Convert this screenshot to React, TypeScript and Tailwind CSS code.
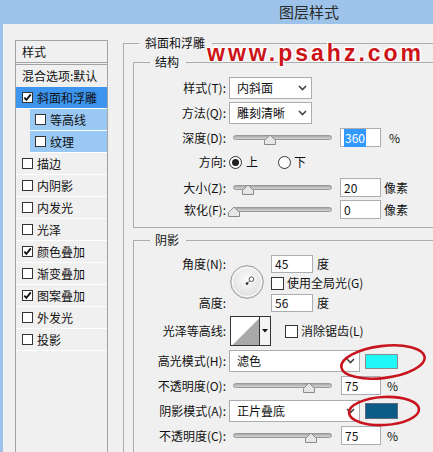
import React from "react";

type Item = { label: string; checked?: boolean; sub?: boolean; active?: boolean };

const items: Item[] = [
  { label: "斜面和浮雕", checked: true, active: true },
  { label: "等高线", sub: true },
  { label: "纹理", sub: true },
  { label: "描边" },
  { label: "内阴影" },
  { label: "内发光" },
  { label: "光泽" },
  { label: "颜色叠加", checked: true },
  { label: "渐变叠加" },
  { label: "图案叠加", checked: true },
  { label: "外发光" },
  { label: "投影" },
];

const Check = ({ checked = false, size = "h-[11px] w-[11px]" }: { checked?: boolean; size?: string }) => (
  <span className={`flex ${size} shrink-0 items-center justify-center border border-[#333] bg-white`}>
    {checked && (
      <svg width="9" height="9" viewBox="0 0 9 9">
        <path d="M1.3 4.6 L3.4 6.9 L7.8 1.4" fill="none" stroke="#111" strokeWidth="1.8" />
      </svg>
    )}
  </span>
);

const ListRow = ({ label, checked, sub, active }: Item) =>
  sub ? (
    <div className="h-[22px] pl-[14px]">
      <div className="flex h-full items-center border-b border-white bg-[#99c8f4] pl-[5px]">
        <Check checked={checked} />
        <span className="ml-[4px]">{label}</span>
      </div>
    </div>
  ) : (
    <div className={`flex h-[22px] items-center border-b border-white pl-[6px] ${active ? "bg-[#3d95ee]" : ""}`}>
      <Check checked={checked} />
      <span className="ml-[4px]">{label}</span>
    </div>
  );

const Label = ({ children }: { children: React.ReactNode }) => (
  <span className="w-[92px] shrink-0 text-right">{children}</span>
);

const Chevron = () => (
  <svg width="9" height="6" viewBox="0 0 9 6">
    <path d="M1 1 L4.5 4.5 L8 1" fill="none" stroke="#444" strokeWidth="1.6" />
  </svg>
);

const Select = ({ text, w }: { text: string; w: string }) => (
  <div className={`ml-[3px] flex ${w} h-[22px] items-center justify-between border border-[#acacac] bg-white pl-[7px] pr-[4px]`}>
    <span>{text}</span>
    <Chevron />
  </div>
);

const Num = ({ v, sel = false, w = "w-[41px]", h = "h-[19px]", ml = "ml-[8px]" }: { v: string; sel?: boolean; w?: string; h?: string; ml?: string }) => (
  <div className={`${ml} flex ${w} ${h} items-center border border-[#abadb3] bg-white pl-[3px]`}>
    <span className={sel ? "bg-[#3399ff] px-px text-white" : ""}>{v}</span>
  </div>
);

const Slider = ({ thumb }: { thumb: string }) => (
  <div className="relative ml-[7px] h-[5px] w-[99px] rounded-full border border-[#989898] bg-gradient-to-b from-[#a8a8a8] to-[#d6d6d6]">
    <svg className={`absolute top-[-2px] ${thumb}`} width="12" height="11" viewBox="0 0 12 11">
      <path d="M0.5 10.5 V6.5 L6 1 L11.5 6.5 V10.5 Z" fill="#e6e6e6" stroke="#8a8a8a" />
    </svg>
  </div>
);

const Radio = ({ on = false }: { on?: boolean }) => (
  <span className="flex h-[13px] w-[13px] items-center justify-center rounded-full border border-[#333] bg-white">
    {on && <span className="h-[7px] w-[7px] rounded-full bg-[#222]" />}
  </span>
);

const Dial = () => (
  <svg width="34" height="34" viewBox="0 0 34 34">
    <defs>
      <radialGradient id="dial" cx="50%" cy="40%" r="60%">
        <stop offset="0" stopColor="#fbfbfb" />
        <stop offset="1" stopColor="#dedede" />
      </radialGradient>
    </defs>
    <circle cx="17" cy="17" r="16.3" fill="url(#dial)" stroke="#9c9c9c" />
    <circle cx="17" cy="17" r="14.5" fill="none" stroke="#ffffff" />
    <line x1="17" y1="18.5" x2="20.5" y2="15" stroke="#666" strokeWidth="1" />
    <circle cx="17" cy="18.6" r="1.3" fill="#333" />
    <circle cx="21.4" cy="14.2" r="2.3" fill="#fff" stroke="#555" />
  </svg>
);

const Contour = () => (
  <div className="ml-[4px] flex h-[30px] w-[41px] border border-[#333] bg-white">
    <svg width="28" height="28" viewBox="0 0 28 28">
      <path d="M1.5 28 L28 1.5 V28 Z" fill="#a9a9a9" />
    </svg>
    <div className="flex w-[11px] items-center justify-center border-l border-[#333] bg-[#f4f4f4]">
      <svg width="6" height="4" viewBox="0 0 6 4">
        <path d="M0 0 H6 L3 3.5 Z" fill="#111" />
      </svg>
    </div>
  </div>
);

export default function App() {
  return (
    <div className="relative h-[452px] w-[433px] overflow-hidden bg-[#9dc3ea] font-['Noto_Sans_CJK_SC',sans-serif] text-[12px] text-[#111]">
      <div className="h-[24px] pl-[279px] text-[15px] leading-[24px] text-[#2a2a2a]">图层样式</div>

      <div className="ml-[3px] flex h-[428px] bg-[#f0f0f0]">
        {/* style list */}
        <div className="ml-[12px] mt-[16px] w-[93px] shrink-0 border-x border-t border-[#a3a3a3]">
          <div className="flex h-[22px] items-center border-b border-[#a3a3a3] pl-[6px]">样式</div>
          <div className="mt-px flex h-[23px] items-center border-t border-[#a3a3a3] pl-[6px]">混合选项:默认</div>
          {items.map((it) => (
            <ListRow key={it.label} {...it} />
          ))}
        </div>

        {/* 斜面和浮雕 */}
        <fieldset className="ml-[15px] mt-[11px] h-[500px] w-[330px] shrink-0 border border-[#acacac]">
          <legend className="ml-[15px] pl-[6px] pr-[7px] leading-[16px]">斜面和浮雕</legend>

          <fieldset className="ml-[9px] mt-[3px] w-[320px] border border-[#acacac] pb-[8px]">
            <legend className="ml-[16px] pl-[5px] pr-[7px] leading-[16px]">结构</legend>

            <div className="mt-[7px] flex h-[22px] items-center">
              <Label>样式(T):</Label>
              <Select text="内斜面" w="w-[83px]" />
            </div>
            <div className="mt-[3px] flex h-[22px] items-center">
              <Label>方法(Q):</Label>
              <Select text="雕刻清晰" w="w-[83px]" />
            </div>
            <div className="mt-[4px] flex h-[19px] items-center">
              <Label>深度(D):</Label>
              <Slider thumb="left-[30px]" />
              <Num v="360" sel />
              <span className="ml-[8px]">%</span>
            </div>
            <div className="mt-[5px] flex h-[20px] items-center">
              <Label>方向:</Label>
              <span className="ml-[3px]">
                <Radio on />
              </span>
              <span className="ml-[4px]">上</span>
              <span className="ml-[20px]">
                <Radio />
              </span>
              <span className="ml-[3px]">下</span>
            </div>
            <div className="mt-[6px] flex h-[19px] items-center">
              <Label>大小(Z):</Label>
              <Slider thumb="left-[8px]" />
              <Num v="20" />
              <span className="ml-[3px]">像素</span>
            </div>
            <div className="mt-[3px] flex h-[19px] items-center">
              <Label>软化(F):</Label>
              <Slider thumb="left-[-6px]" />
              <Num v="0" />
              <span className="ml-[3px]">像素</span>
            </div>
          </fieldset>

          <fieldset className="ml-[9px] mt-[4px] h-[400px] w-[320px] border border-[#acacac]">
            <legend className="ml-[16px] pl-[5px] pr-[7px] leading-[16px]">阴影</legend>

            <div className="mt-[7px] flex">
              <div className="flex w-[92px] flex-col items-end">
                <span className="flex h-[18px] items-center">角度(N):</span>
                <span className="mt-[21px] flex h-[18px] items-center">高度:</span>
              </div>
              <div className="ml-[4px] w-[34px] pt-[10px]">
                <Dial />
              </div>
              <div className="ml-[7px] flex flex-col">
                <div className="flex h-[18px] items-center">
                  <Num v="45" ml="ml-0" w="w-[42px]" h="h-[18px]" />
                  <span className="ml-[4px]">度</span>
                </div>
                <div className="mt-[3px] flex h-[14px] items-center">
                  <Check size="h-[13px] w-[13px]" />
                  <span className="ml-[3px]">使用全局光(G)</span>
                </div>
                <div className="mt-[4px] flex h-[18px] items-center">
                  <Num v="56" ml="ml-0" w="w-[42px]" h="h-[18px]" />
                  <span className="ml-[4px]">度</span>
                </div>
              </div>
            </div>

            <div className="mt-[4px] flex h-[30px] items-center">
              <Label>光泽等高线:</Label>
              <Contour />
              <span className="ml-[14px]">
                <Check size="h-[13px] w-[13px]" />
              </span>
              <span className="ml-[3px]">消除锯齿(L)</span>
            </div>

            <div className="mt-[4px] flex h-[22px] items-center">
              <Label>高光模式(H):</Label>
              <Select text="滤色" w="w-[131px]" />
              <span className="ml-[5px] h-[15px] w-[33px] border border-[#8c8c8c] bg-[#1ff8f8]" />
            </div>
            <div className="mt-[4px] flex h-[19px] items-center">
              <Label>不透明度(O):</Label>
              <Slider thumb="left-[69px]" />
              <Num v="75" ml="ml-[9px]" w="w-[40px]" />
              <span className="ml-[6px]">%</span>
            </div>
            <div className="mt-[5px] flex h-[22px] items-center">
              <Label>阴影模式(A):</Label>
              <Select text="正片叠底" w="w-[131px]" />
              <span className="ml-[5px] h-[16px] w-[33px] border border-[#5a6a78] bg-[#0c5a86]" />
            </div>
            <div className="mt-[4px] flex h-[19px] items-center">
              <Label>不透明度(C):</Label>
              <Slider thumb="left-[71px]" />
              <Num v="75" ml="ml-[9px]" w="w-[40px]" />
              <span className="ml-[6px]">%</span>
            </div>
          </fieldset>
        </fieldset>
      </div>

      {/* watermark */}
      <div className="absolute left-[207px] top-[42px] font-['Liberation_Sans',sans-serif] text-[23px] font-bold leading-none tracking-[3px] text-[#cc1418] [text-shadow:1px_1px_0_#fff,-1px_-1px_0_#fff,1px_-1px_0_#fff,-1px_1px_0_#fff,0_0_3px_#fff]">
        www.psahz.com
      </div>

      {/* red annotation rings */}
      <svg className="absolute left-[330px] top-[335px]" width="103" height="100" viewBox="0 0 103 100">
        <ellipse cx="53" cy="27" rx="42" ry="16" transform="rotate(-7 53 27)" fill="none" stroke="#c8141e" strokeWidth="2.6" />
        <ellipse cx="54" cy="76" rx="35" ry="14" transform="rotate(-3 54 76)" fill="none" stroke="#c8141e" strokeWidth="2.6" />
      </svg>
    </div>
  );
}
